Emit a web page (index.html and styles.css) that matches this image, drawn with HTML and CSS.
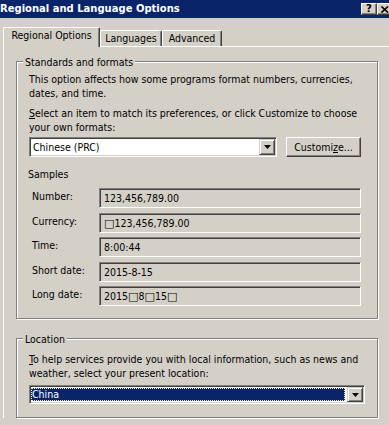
FILE: index.html
```html
<!DOCTYPE html>
<html lang="en">
<head>
    <meta charset="UTF-8">
    <meta name="viewport" content="width=device-width, initial-scale=1.0">
    <title>Regional and Language Options</title>
    <link rel="stylesheet" href="styles.css">
</head>
<body>
    <div class="titlebar">
        <span class="title">Regional and Language Options</span>
        <div class="caption-buttons">
            <div class="cap-btn help">?</div>
            <div class="cap-btn">
                <svg width="8" height="7" viewBox="0 0 8 7">
                    <path d="M0.5 0.5 L7 6.5 M7 0.5 L0.5 6.5" stroke="#000" stroke-width="1.6" fill="none"/>
                </svg>
            </div>
        </div>
    </div>

    <div class="tabs">
        <div class="tab active">Regional Options</div>
        <div class="tab tab-languages">Languages</div>
        <div class="tab tab-advanced">Advanced</div>
    </div>

    <div class="panel">
        <div class="group formats">
            <span class="group-label">Standards and formats</span>
            <p>This option affects how some programs format numbers, currencies,<br>dates, and time.</p>
            <p class="gap"><u>S</u>elect an item to match its preferences, or click Customize to choose<br>your own formats:</p>
            <div class="format-row">
                <div class="combo">
                    <span class="combo-text">Chinese (PRC)</span>
                    <div class="arrow">
                        <svg width="7" height="4" viewBox="0 0 7 4"><path d="M0 0 H7 L3.5 4 Z" fill="#000"/></svg>
                    </div>
                </div>
                <div class="button">Customi<u>z</u>e...</div>
            </div>

            <div class="samples-title">Samples</div>
            <div class="samples">
                <span class="sample-label">Number:</span>
                <div class="sample-field">123,456,789.00</div>
                <span class="sample-label">Currency:</span>
                <div class="sample-field"><span class="tofu">□</span>123,456,789.00</div>
                <span class="sample-label">Time:</span>
                <div class="sample-field">8:00:44</div>
                <span class="sample-label">Short date:</span>
                <div class="sample-field">2015-8-15</div>
                <span class="sample-label">Long date:</span>
                <div class="sample-field">2015<span class="tofu">□</span>8<span class="tofu">□</span>15<span class="tofu">□</span></div>
            </div>
        </div>

        <div class="group location">
            <span class="group-label">Location</span>
            <p><u>T</u>o help services provide you with local information, such as news and<br>weather, select your present location:</p>
            <div class="combo wide">
                <span class="combo-text selected">China</span>
                <div class="arrow">
                    <svg width="7" height="4" viewBox="0 0 7 4"><path d="M0 0 H7 L3.5 4 Z" fill="#000"/></svg>
                </div>
            </div>
        </div>
    </div>
</body>
</html>
```

FILE: styles.css
```css
html, body {
    margin: 0;
}
body {
    width: 389px;
    height: 425px;
    overflow: hidden;
    background-color: #d4d0c8;
    font-family: "DejaVu Sans Condensed", "DejaVu Sans", sans-serif;
    font-size: 10.5px;
    line-height: 14px;
    color: #000;
}
p {
    margin: 0;
    white-space: nowrap;
}

/* title bar */
.titlebar {
    display: flex;
    height: 18px;
    background-color: #0a246a;
    color: #fff;
}
.title {
    font-family: "DejaVu Sans", sans-serif;
    font-size: 10px;
    font-weight: bold;
    line-height: 18px;
    white-space: nowrap;
}
.caption-buttons {
    display: flex;
    margin-left: auto;
    margin-right: -4px;
    padding-top: 3px;
}
.cap-btn {
    width: 16px;
    height: 12px;
    box-sizing: border-box;
    display: flex;
    align-items: center;
    justify-content: center;
    background-color: #d4d0c8;
    border: 1px solid;
    border-color: #fff #404040 #404040 #fff;
    box-shadow: inset -1px -1px 0 #808080;
    color: #000;
}
.cap-btn.help {
    font-family: "DejaVu Sans", sans-serif;
    font-weight: bold;
    font-size: 10px;
    line-height: 10px;
}

/* tabs */
.tabs {
    display: flex;
    align-items: flex-end;
    height: 19px;
    margin-top: 9px;
    padding-left: 3px;
}
.tab {
    box-sizing: border-box;
    height: 16px;
    border-top: 1px solid #fff;
    border-left: 1px solid #fff;
    border-right: 1px solid #404040;
    border-radius: 2px 2px 0 0;
    box-shadow: inset -1px 0 0 #808080;
    text-align: center;
    line-height: 15px;
    white-space: nowrap;
}
.tab.active {
    width: 97px;
    height: 20px;
    margin-bottom: -1px;
    position: relative;
    z-index: 1;
    background-color: #d4d0c8;
    line-height: 14px;
}
.tab-languages {
    width: 62px;
}
.tab-advanced {
    width: 60px;
}

/* page */
.panel {
    margin-left: 3px;
    border-top: 1px solid #fff;
    border-left: 1px solid #fff;
    padding: 14px 0 0 12px;
}
.group {
    position: relative;
    box-sizing: border-box;
    width: 362px;
    border: 1px solid #808080;
    box-shadow: inset 1px 1px 0 #fff, 1px 1px 0 #fff;
    padding: 10px 16px 12px 12px;
}
.group-label {
    position: absolute;
    top: -7px;
    left: 6px;
    padding: 0 2px;
    background-color: #d4d0c8;
    white-space: nowrap;
}
.gap {
    margin-top: 6px;
}

.format-row {
    display: flex;
    justify-content: space-between;
    margin-top: 3px;
}
.combo {
    box-sizing: border-box;
    display: flex;
    width: 248px;
    height: 20px;
    background-color: #fff;
    border: 1px solid;
    border-color: #808080 #fff #fff #808080;
    box-shadow: inset 1px 1px 0 #404040, inset -1px -1px 0 #d4d0c8;
}
.combo-text {
    flex: 1;
    padding-left: 3px;
    line-height: 18px;
    white-space: nowrap;
}
.arrow {
    box-sizing: border-box;
    width: 16px;
    margin: 1px 1px 1px 0;
    display: flex;
    align-items: center;
    justify-content: center;
    background-color: #d4d0c8;
    border: 1px solid;
    border-color: #d4d0c8 #404040 #404040 #d4d0c8;
    box-shadow: inset 1px 1px 0 #fff, inset -1px -1px 0 #808080;
}
.button {
    box-sizing: border-box;
    width: 75px;
    height: 20px;
    border: 1px solid;
    border-color: #fff #404040 #404040 #fff;
    box-shadow: inset -1px -1px 0 #808080;
    text-align: center;
    line-height: 18px;
    white-space: nowrap;
}

.samples-title {
    margin-top: 10px;
    margin-left: -1px;
}
.samples {
    display: grid;
    grid-template-columns: 70px 1fr;
    row-gap: 4.5px;
    margin-top: 7px;
}
.sample-label {
    padding-left: 3px;
    line-height: 16px;
    white-space: nowrap;
}
.sample-field {
    box-sizing: border-box;
    height: 20px;
    border: 1px solid;
    border-color: #808080 #fff #fff #808080;
    box-shadow: inset 1px 1px 0 #404040;
    padding-left: 4px;
    line-height: 19px;
    white-space: nowrap;
}
.tofu {
    font-family: "DejaVu Sans", sans-serif;
    font-size: 11px;
}

.location {
    margin-top: 19px;
    padding-top: 13px;
    padding-bottom: 13px;
}
.location .combo {
    margin-top: 5px;
}
.combo.wide {
    width: 336px;
    height: 19px;
}
.combo-text.selected {
    margin: 2px 2px 2px 1px;
    padding-left: 1px;
    line-height: 13px;
    background-color: #0a246a;
    color: #fff;
    outline: 1px dotted #f4f0c8;
    outline-offset: -1px;
}
```
